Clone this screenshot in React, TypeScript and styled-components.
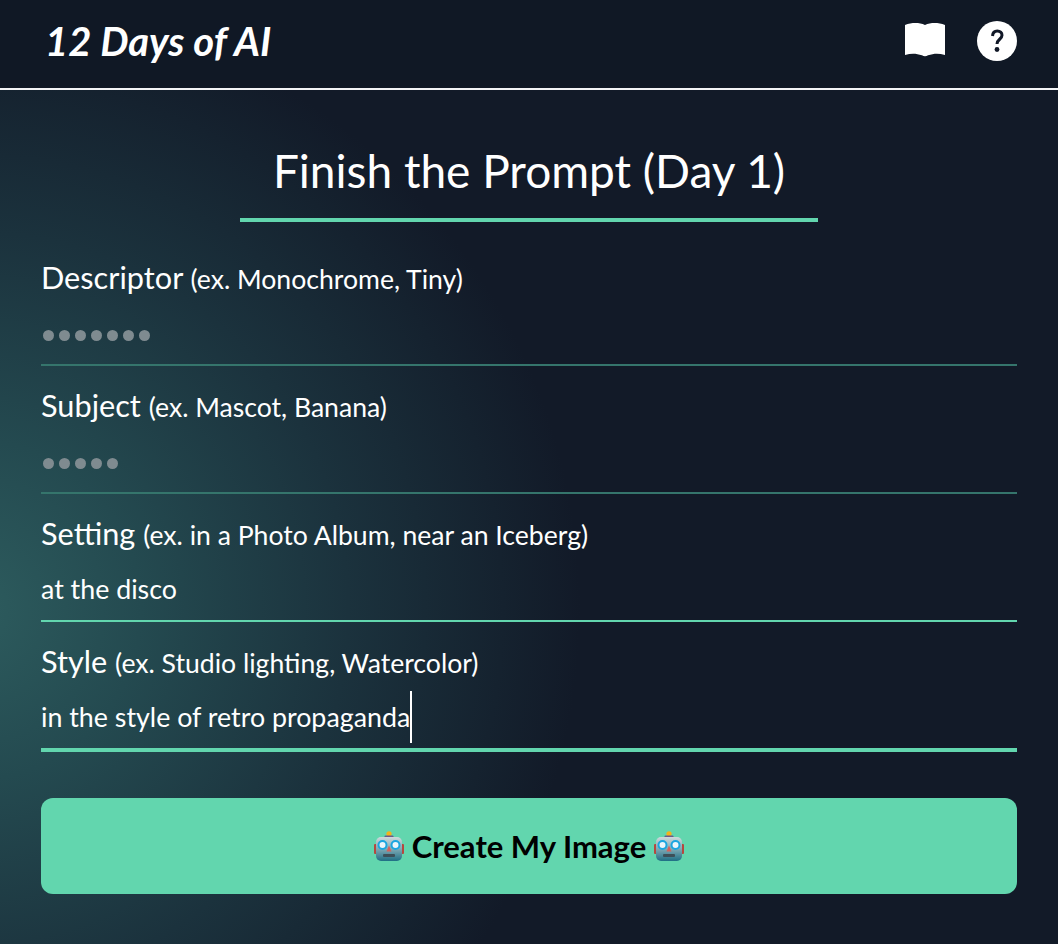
import styled, { createGlobalStyle } from "styled-components"

const GlobalStyle = createGlobalStyle`
  html, body {
    margin: 0;
    padding: 0;
    background: #121a28;
  }
  * {
    box-sizing: border-box;
  }
`

const Page = styled.div`
  width: 1058px;
  height: 944px;
  overflow: hidden;
  color: #fff;
  font-family: "Lato", "Noto Sans", sans-serif;
  background: radial-gradient(circle 610px at -30px 610px, #2d5c5e 0%, #244a50 28%, #1b323d 62%, #121a28 100%);
`

const Header = styled.header`
  height: 90px;
  padding: 0 41px 6px 45px;
  display: flex;
  align-items: center;
  justify-content: space-between;
  background: #101825;
  border-bottom: 2px solid #f3f4f6;
`

const Logo = styled.div`
  font-size: 40px;
  font-weight: 700;
  font-style: italic;
`

const HeaderIcons = styled.div`
  display: flex;
  align-items: center;
  gap: 32px;

  svg:first-child {
    margin-bottom: 3px;
  }
`

const Main = styled.main`
  padding: 0 41px;
  display: flex;
  flex-direction: column;
`

const Title = styled.h1`
  align-self: center;
  width: 578px;
  height: 132px;
  margin: 0 0 16px;
  padding-top: 51px;
  text-align: center;
  font-size: 46px;
  line-height: 60px;
  font-weight: 400;
  border-bottom: 4px solid #62d6ae;
`

const Field = styled.div<{ $active?: boolean; $filled?: boolean }>`
  height: ${(p) => (p.$active ? "130px" : "128px")};
  padding-top: 22px;
  border-bottom: ${(p) => (p.$active ? "4px" : "2px")} solid ${(p) => (p.$filled || p.$active ? "#62d6ae" : "#35756c")};
`

const Label = styled.div`
  font-size: 30.700px;
  line-height: 36px;
  white-space: nowrap;

  small {
    font-size: 26.600px;
  }
`

const Value = styled.div`
  margin-top: 19px;
  font-size: 26.800px;
  line-height: 34px;
  white-space: nowrap;
`

const Dots = styled.div`
  display: flex;
  gap: 5px;
  height: 34px;
  margin-top: 19px;
  padding: 14px 0 0 2px;
`

const Dot = styled.span`
  width: 11px;
  height: 11px;
  border-radius: 50%;
  background: #7f8b90;
`

const Caret = styled.span`
  display: inline-block;
  width: 2px;
  height: 52px;
  margin: -12px 0 -6px 0;
  vertical-align: middle;
  background: #fff;
`

const Submit = styled.button`
  height: 96px;
  margin-top: 46px;
  display: flex;
  align-items: center;
  justify-content: center;
  gap: 8px;
  border: none;
  border-radius: 12px;
  background: #62d6ae;
  color: #000;
  font-family: inherit;
  font-size: 31px;
  font-weight: 700;
`

const BookIcon = () => (
  <svg width="40" height="34" viewBox="0 0 40 34">
    <path
      fill="#fff"
      d="M0 2C7-.6 14-.6 20 2c6-2.600 13-2.600 20 0v30c-6-1.800-11-1.800-17 0.300-1.800 1.200-4.200 1.200-6 0C11 30.200 6 30.200 0 32z"
    />
  </svg>
)

const HelpIcon = () => (
  <svg width="40" height="40" viewBox="0 0 40 40">
    <circle cx="20" cy="20" r="20" fill="#fff" />
    <path
      d="M15.500 15c.3-3.500 2.200-5 4.800-5 2.800 0 4.700 1.800 4.700 4.300 0 4-5 4-5 8.700"
      fill="none"
      stroke="#111827"
      strokeWidth="3"
    />
    <circle cx="20" cy="28.500" r="2.400" fill="#111827" />
  </svg>
)

const RobotIcon = () => (
  <svg width="30" height="30" viewBox="0 0 30 30">
    <defs>
      <linearGradient id="robotFace" x1="0" y1="0" x2="0" y2="1">
        <stop offset="0" stopColor="#cfd9dc" />
        <stop offset="0.5" stopColor="#7fa9b4" />
        <stop offset="1" stopColor="#1f6f85" />
      </linearGradient>
    </defs>
    <rect x="0" y="13" width="3" height="10" rx="1" fill="#b5483f" />
    <rect x="27" y="13" width="3" height="10" rx="1" fill="#b5483f" />
    <circle cx="15" cy="2.800" r="2.600" fill="#f5b21b" />
    <rect x="10.500" y="4.500" width="9" height="3" rx="1" fill="#6a5a8c" />
    <rect x="2" y="6" width="26" height="24" rx="5" fill="url(#robotFace)" />
    <circle cx="8.500" cy="14" r="4" fill="#eaf6fb" stroke="#1aa6e0" strokeWidth="2" />
    <circle cx="21.500" cy="14" r="4" fill="#eaf6fb" stroke="#1aa6e0" strokeWidth="2" />
    <path d="M15 14.500l2.500 6h-5z" fill="#d8605a" />
    <rect x="9" y="23" width="12" height="3" rx="1" fill="#3d4f58" />
  </svg>
)

const App = () => {
  return (
    <Page>
      <GlobalStyle />
      <Header>
        <Logo>12 Days of AI</Logo>
        <HeaderIcons>
          <BookIcon />
          <HelpIcon />
        </HeaderIcons>
      </Header>
      <Main>
        <Title>Finish the Prompt (Day 1)</Title>
        <Field>
          <Label>
            Descriptor <small>(ex. Monochrome, Tiny)</small>
          </Label>
          <Dots>
            {Array.from({ length: 7 }).map((_, i) => (
              <Dot key={i} />
            ))}
          </Dots>
        </Field>
        <Field>
          <Label>
            Subject <small>(ex. Mascot, Banana)</small>
          </Label>
          <Dots>
            {Array.from({ length: 5 }).map((_, i) => (
              <Dot key={i} />
            ))}
          </Dots>
        </Field>
        <Field $filled>
          <Label>
            Setting <small>(ex. in a Photo Album, near an Iceberg)</small>
          </Label>
          <Value>at the disco</Value>
        </Field>
        <Field $active>
          <Label>
            Style <small>(ex. Studio lighting, Watercolor)</small>
          </Label>
          <Value>
            in the style of retro propaganda
            <Caret />
          </Value>
        </Field>
        <Submit>
          <RobotIcon />
          Create My Image
          <RobotIcon />
        </Submit>
      </Main>
    </Page>
  )
}

export default App
